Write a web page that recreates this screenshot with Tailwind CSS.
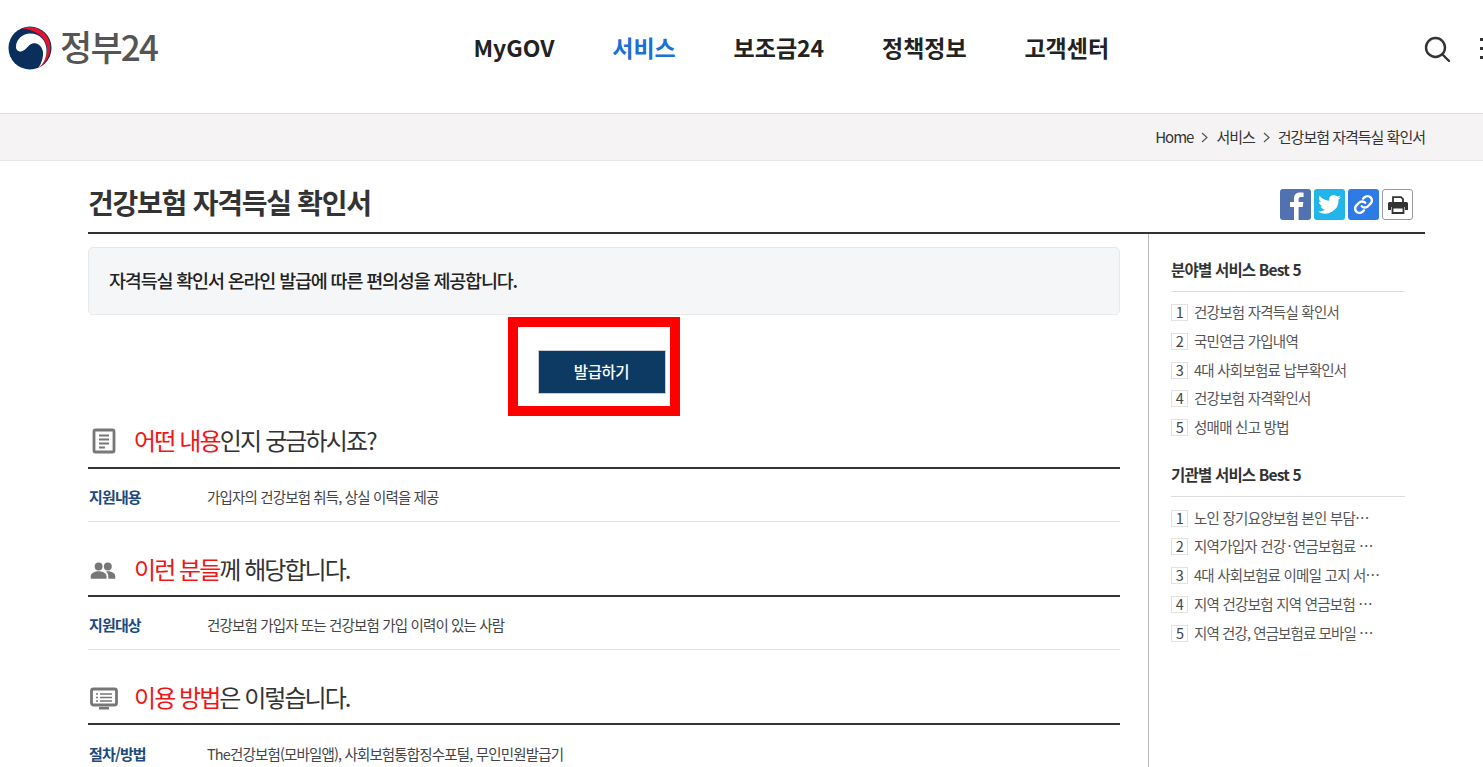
<!DOCTYPE html>
<html lang="ko">
<head>
    <meta charset="UTF-8">
    <title>건강보험 자격득실 확인서 - 정부24</title>
    <script src="https://cdn.jsdelivr.net/npm/@tailwindcss/browser@4"></script>
</head>
<body class="bg-white h-[767px] w-[1483px] overflow-hidden font-['Noto_Sans_CJK_KR','Noto_Sans',sans-serif] text-[#222]">
    <!-- header -->
    <header class="h-[114px] border-b border-[#dcdcdc] flex relative">
        <div class="w-[160px] h-[96px] pl-[8px] flex items-center gap-[8px]">
            <svg width="44" height="44" viewBox="0 0 44 44">
                <circle cx="22" cy="22" r="21.5" fill="#0b2f5c"/>
                <path d="M14 2.500C23-1 35 2 40.500 13 45.500 25 40 36 30 42.500 36.500 36 40.500 27 38.500 19 34.500 7.500 23 3 14 2.500Z" fill="#e2142d"/>
                <path d="M8 21C8 13 15 7.500 22 7.500 32 7.500 38.500 15 38.500 24 38.500 32 35.500 38 30 42.500 34.500 36 36 28 34.500 24 32.500 17.500 26 15.500 21.500 19 18 23 14.500 26 11.500 25.500 9 25 8 23 8 21Z" fill="#fff"/>
            </svg>
            <span class="text-[35px] leading-none font-medium tracking-[-1.8px] text-[#555] mt-[-6px]">정부24</span>
        </div>
        <nav class="absolute left-[473.5px] top-[31px] flex gap-[57.8px] text-[23px] leading-[32px] font-bold tracking-[0px] text-[#222]">
            <a href="#">MyGOV</a>
            <a href="#" class="text-[#1a6fd8]">서비스</a>
            <a href="#">보조금24</a>
            <a href="#">정책정보</a>
            <a href="#">고객센터</a>
        </nav>
        <svg class="absolute left-[1423px] top-[36px]" width="28" height="28" viewBox="0 0 28 28" fill="none" stroke="#333" stroke-width="2.4">
            <circle cx="12.5" cy="11.5" r="9.5"/>
            <path d="M19.5 18.5 L26 25" stroke-linecap="round"/>
        </svg>
        <div class="absolute left-[1480px] top-[38px] flex flex-col gap-[6px]">
            <span class="block w-[3px] h-[3px] bg-[#333]"></span>
            <span class="block w-[3px] h-[3px] bg-[#333]"></span>
            <span class="block w-[3px] h-[3px] bg-[#333]"></span>
        </div>
    </header>

    <!-- breadcrumb -->
    <div class="h-[47px] bg-[#f5f3f3] border-b border-[#e8e6e6] flex items-center justify-end gap-[8px] pr-[58px] text-[15px] tracking-[-1px] text-[#333]">
        <span>Home</span>
        <svg width="7" height="11" viewBox="0 0 7 11" fill="none" stroke="#555" stroke-width="1.2"><path d="M1 1l5 4.500-5 4.500"/></svg>
        <span>서비스</span>
        <svg width="7" height="11" viewBox="0 0 7 11" fill="none" stroke="#555" stroke-width="1.2"><path d="M1 1l5 4.500-5 4.500"/></svg>
        <span>건강보험 자격득실 확인서</span>
    </div>

    <!-- content -->
    <main class="ml-[88px] w-[1337px]">
        <div class="h-[73px] pt-[16px] border-b-2 border-[#333] flex items-center justify-between">
            <h1 class="text-[28px] font-bold tracking-[-1.25px] text-[#333] mt-[-6px]">건강보험 자격득실 확인서</h1>
            <div class="flex gap-[3px] mr-[12px]">
                <span class="w-[31px] h-[31px] rounded-[3px] bg-[#5271b0] overflow-hidden flex items-end justify-center">
                    <svg width="31" height="31" viewBox="0 0 31 31"><path d="M14 31V18H10v-5h4V9.500C14 5.500 16.500 3.500 20 3.500c1.700 0 3.200.1 3.600.2V8h-2.600c-2 0-2.400 1-2.400 2.300V13h4.800l-.7 5h-4.100v13z" fill="#fff"/></svg>
                </span>
                <span class="w-[31px] h-[31px] rounded-[3px] bg-[#22b5ea] flex items-center justify-center">
                    <svg width="25" height="25" viewBox="0 0 24 24"><path fill="#fff" d="M23 5.100c-.8.400-1.700.6-2.600.7.900-.6 1.600-1.400 2-2.500-.9.500-1.800.9-2.900 1.100A4.500 4.500 0 0 0 11.800 8.500C8 8.300 4.700 6.500 2.500 3.700c-1.200 2.100-.6 4.700 1.400 6-.7 0-1.400-.2-2-.6 0 2.200 1.500 4.100 3.600 4.500-.7.200-1.400.2-2 .1.600 1.800 2.200 3.100 4.200 3.100A9.100 9.100 0 0 1 1 18.700 12.800 12.800 0 0 0 20.700 7.300c.9-.6 1.700-1.400 2.300-2.200z"/></svg>
                </span>
                <span class="w-[31px] h-[31px] rounded-[3px] bg-[#2f7be5] flex items-center justify-center">
                    <svg width="21" height="21" viewBox="0 0 24 24" fill="none" stroke="#fff" stroke-width="2.8" stroke-linecap="round"><path d="M10 14a5 5 0 0 0 7.100 0l3-3a5 5 0 0 0-7.100-7.100l-1.500 1.500"/><path d="M14 10a5 5 0 0 0-7.100 0l-3 3a5 5 0 0 0 7.100 7.100l1.500-1.500"/></svg>
                </span>
                <span class="w-[31px] h-[31px] rounded-[3px] border border-[#999] bg-white flex items-center justify-center">
                    <svg width="20" height="18" viewBox="0 0 20 18"><path d="M5 6V1.200h8l2 2V6" fill="none" stroke="#333" stroke-width="1.800"/><path d="M1.500 6h17A1.500 1.500 0 0 1 20 7.500V14h-3v-3H3v3H0V7.500A1.500 1.500 0 0 1 1.500 6z" fill="#333"/><path d="M4.500 11.500h11v5.500h-11z" fill="none" stroke="#333" stroke-width="1.800"/></svg>
                </span>
            </div>
        </div>

        <div class="flex">
            <!-- left column -->
            <div class="w-[1032px] relative">
                <div class="mt-[13px] h-[68px] bg-[#f5f6f8] border border-[#e6e8eb] rounded-[5px] pl-[20px] flex items-center text-[18.5px] font-medium tracking-[-1.2px] text-[#222]">자격득실 확인서 온라인 발급에 따른 편의성을 제공합니다.</div>

                <div class="absolute left-[420px] top-[83px] w-[172px] h-[99px] border-[10px] border-[#ff0000]"></div>
                <div class="mt-[36px] flex justify-center pr-[5px]">
                    <a href="#" class="w-[128px] h-[44px] mt-[-1px] border border-[#c8ccd4] bg-[#0d3a63] text-white text-[15.5px] font-medium tracking-[-0.4px] flex items-center justify-center">발급하기</a>
                </div>

                <section class="mt-[27px]">
                    <div class="h-[48px] border-b-2 border-[#333] flex items-center pb-[7px]">
                        <span class="w-[46px] flex justify-start pl-[4px] pt-[1px]">
                            <svg width="24" height="26" viewBox="0 0 24 26" fill="none"><rect x="2" y="2" width="20" height="22" rx="1.500" stroke="#777" stroke-width="2.800"/><path d="M7 7.500h10M7 11.500h10M7 15.500h10M7 19.500h6" stroke="#777" stroke-width="1.800"/></svg>
                        </span>
                        <h2 class="text-[24px] tracking-[-1.85px] text-[#333] mt-[-2px]"><span class="text-[#f01414]">어떤 내용</span>인지 궁금하시죠?</h2>
                    </div>
                    <div class="h-[53px] pt-[4px] pl-[1px] border-b border-[#e5e5e5] flex items-center text-[14.5px] tracking-[-0.85px]">
                        <span class="w-[118px] font-bold text-[15px] text-[#1c4a80]">지원내용</span>
                        <span class="text-[#444]">가입자의 건강보험 취득, 상실 이력을 제공</span>
                    </div>
                </section>

                <section class="mt-[27px]">
                    <div class="h-[48px] border-b-2 border-[#333] flex items-center pb-[5px]">
                        <span class="w-[46px] flex justify-start pl-[1px]">
                            <svg width="28" height="20" viewBox="0 0 32 20" fill="#777"><circle cx="11" cy="6" r="4.500"/><circle cx="21.500" cy="6" r="4.500"/><path d="M2 20v-3c0-3.500 5-5.500 9-5.500s9 2 9 5.500v3z"/><path d="M21 11.500c4.500 0 9 2 9 5.500v3h-8v-3c0-2-.5-3.500-2.500-5.400z"/></svg>
                        </span>
                        <h2 class="text-[24px] tracking-[-1.95px] text-[#333] mt-[-2px]"><span class="text-[#f01414]">이런 분들</span>께 해당합니다.</h2>
                    </div>
                    <div class="h-[53px] pt-[4px] pl-[1px] border-b border-[#e5e5e5] flex items-center text-[14.5px] tracking-[-0.85px]">
                        <span class="w-[118px] font-bold text-[15px] text-[#1c4a80]">지원대상</span>
                        <span class="text-[#444]">건강보험 가입자 또는 건강보험 가입 이력이 있는 사람</span>
                    </div>
                </section>

                <section class="mt-[27px]">
                    <div class="h-[48px] border-b-2 border-[#333] flex items-center pb-[5px]">
                        <span class="w-[46px] flex justify-start pl-[2px] pt-[2px]">
                            <svg width="28" height="24" viewBox="0 0 28 24" fill="none"><rect x="1.500" y="2" width="25" height="16" rx="2" stroke="#777" stroke-width="2.800"/><path d="M6 7h2M10 7h12M6 10.500h2M10 10.500h12M6 14h2M10 14h12" stroke="#777" stroke-width="1.600"/><path d="M9 20h10v2.500H9z" fill="#777"/></svg>
                        </span>
                        <h2 class="text-[24px] tracking-[-1.95px] text-[#333] mt-[-2px]"><span class="text-[#f01414]">이용 방법</span>은 이렇습니다.</h2>
                    </div>
                    <div class="h-[54px] pt-[4px] pl-[1px] flex items-center text-[14.5px] tracking-[-0.85px]">
                        <span class="w-[118px] font-bold text-[15px] text-[#1c4a80]">절차/방법</span>
                        <span class="text-[#444]">The건강보험(모바일앱), 사회보험통합징수포털, 무인민원발급기</span>
                    </div>
                </section>
            </div>

            <!-- sidebar -->
            <aside class="ml-[28px] w-[277px] h-[540px] border-l border-[#bdbdbd] pl-[22px] pr-[20px]">
                <h3 class="mt-[23px] h-[35px] border-b border-[#dedede] text-[15.5px] leading-[24px] font-bold tracking-[-0.8px] text-[#333]">분야별 서비스 Best 5</h3>
                <ul class="mt-[5px] text-[14.5px] tracking-[-0.75px] text-[#555]">
                    <li class="h-[29px] flex items-center gap-[6px]"><span class="w-[17px] h-[17px] mt-[1px] border border-[#e2e2e2] flex items-center justify-center text-[14.5px] leading-none text-[#444]">1</span>건강보험 자격득실 확인서</li>
                    <li class="h-[29px] flex items-center gap-[6px]"><span class="w-[17px] h-[17px] mt-[1px] border border-[#e2e2e2] flex items-center justify-center text-[14.5px] leading-none text-[#444]">2</span>국민연금 가입내역</li>
                    <li class="h-[29px] flex items-center gap-[6px]"><span class="w-[17px] h-[17px] mt-[1px] border border-[#e2e2e2] flex items-center justify-center text-[14.5px] leading-none text-[#444]">3</span>4대 사회보험료 납부확인서</li>
                    <li class="h-[28px] flex items-center gap-[6px]"><span class="w-[17px] h-[17px] mt-[1px] border border-[#e2e2e2] flex items-center justify-center text-[14.5px] leading-none text-[#444]">4</span>건강보험 자격확인서</li>
                    <li class="h-[29px] flex items-center gap-[6px]"><span class="w-[17px] h-[17px] mt-[1px] border border-[#e2e2e2] flex items-center justify-center text-[14.5px] leading-none text-[#444]">5</span>성매매 신고 방법</li>
                </ul>
                <h3 class="mt-[21px] h-[35px] border-b border-[#dedede] text-[15.5px] leading-[24px] font-bold tracking-[-0.8px] text-[#333]">기관별 서비스 Best 5</h3>
                <ul class="mt-[6px] text-[14.5px] tracking-[-0.75px] text-[#555]">
                    <li class="h-[29px] flex items-center gap-[6px]"><span class="w-[17px] h-[17px] mt-[1px] border border-[#e2e2e2] flex items-center justify-center text-[14.5px] leading-none text-[#444]">1</span>노인 장기요양보험 본인 부담…</li>
                    <li class="h-[28px] flex items-center gap-[6px]"><span class="w-[17px] h-[17px] mt-[1px] border border-[#e2e2e2] flex items-center justify-center text-[14.5px] leading-none text-[#444]">2</span><span>지역가입자 건강<span class="mx-[2px]">·</span>연금보험료 …</span></li>
                    <li class="h-[29px] flex items-center gap-[6px]"><span class="w-[17px] h-[17px] mt-[1px] border border-[#e2e2e2] flex items-center justify-center text-[14.5px] leading-none text-[#444]">3</span>4대 사회보험료 이메일 고지 서…</li>
                    <li class="h-[29px] flex items-center gap-[6px]"><span class="w-[17px] h-[17px] mt-[1px] border border-[#e2e2e2] flex items-center justify-center text-[14.5px] leading-none text-[#444]">4</span>지역 건강보험 지역 연금보험 …</li>
                    <li class="h-[29px] flex items-center gap-[6px] tracking-[-0.9px]"><span class="w-[17px] h-[17px] mt-[1px] border border-[#e2e2e2] flex items-center justify-center text-[14.5px] leading-none text-[#444]">5</span>지역 건강, 연금보험료 모바일 …</li>
                </ul>
            </aside>
        </div>
    </main>
</body>
</html>
